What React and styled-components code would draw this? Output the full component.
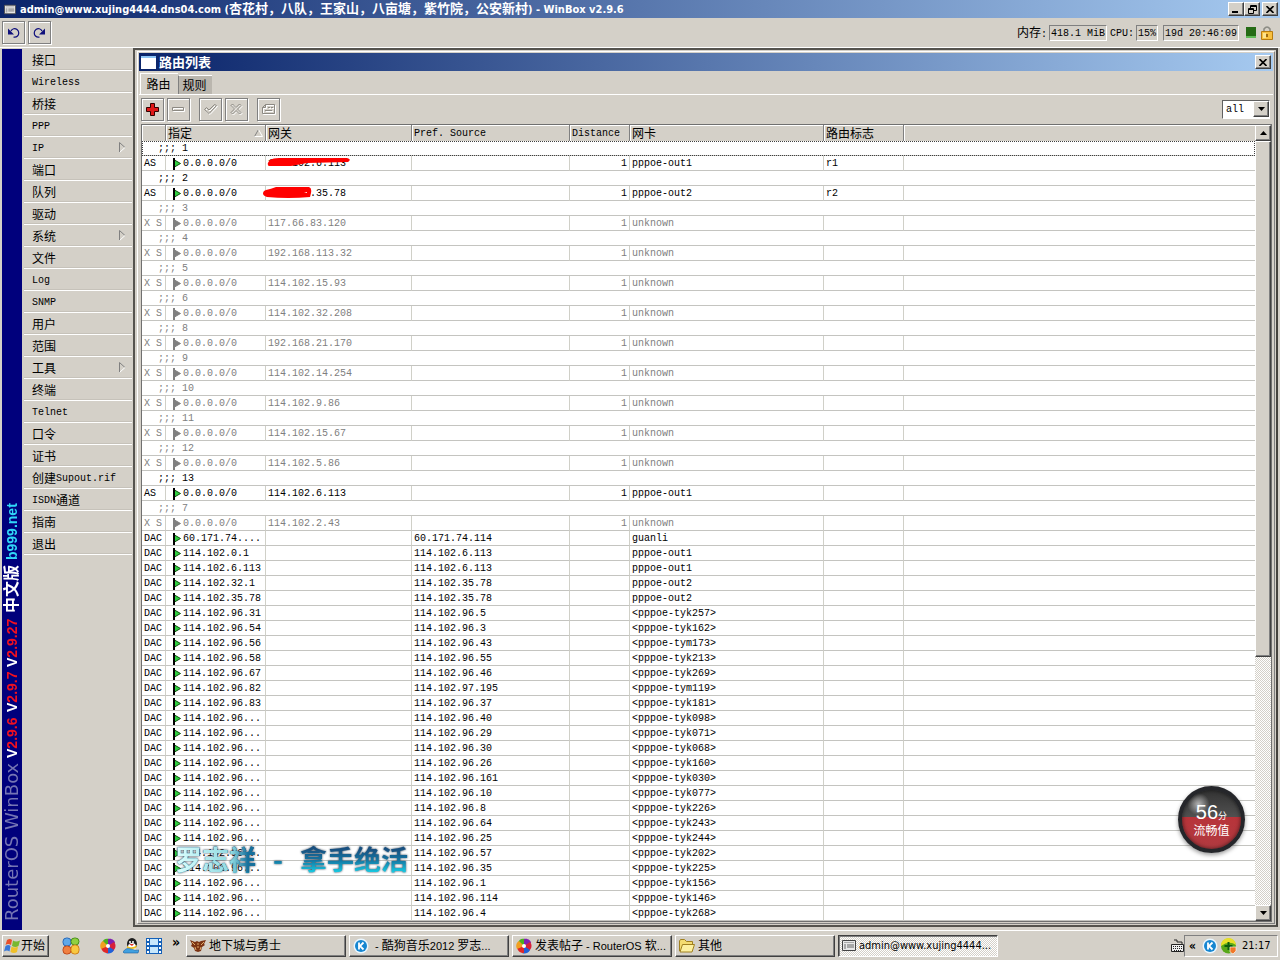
import React from "react";
import styled, { createGlobalStyle } from "styled-components";

const GlobalStyle = createGlobalStyle`
	* {
		box-sizing: border-box;
	}
	body {
		margin: 0;
		overflow: hidden;
		background: #d4d0c8;
		color: #000;
		font: 12px "Noto Sans CJK SC", sans-serif;
	}
	button, select {
		font: inherit;
		color: inherit;
		margin: 0;
		padding: 0;
		border-radius: 0;
	}
`;

const MONO = `"Liberation Mono", "Noto Sans CJK SC", monospace`;
const TAHOMA = `"DejaVu Sans Condensed", "Noto Sans CJK SC", sans-serif`;

const raised = `
	border: 1px solid;
	border-color: #fff #404040 #404040 #fff;
	box-shadow: inset -1px -1px 0 #808080;
	background: #d4d0c8;
`;

const dither = `repeating-conic-gradient(#fff 0 25%, #d4d0c8 0 50%) 0 0 / 2px 2px`;

const Page = styled.div`
	height: 100vh;
	display: flex;
	flex-direction: column;
`;

const TitleBar = styled.header`
	height: 18px;
	flex: none;
	display: flex;
	align-items: center;
	gap: ${(p) => p.$gap || 4}px;
	padding: 0 2px 0 ${(p) => p.$left || 4}px;
	background: linear-gradient(90deg, #0a246a, #a6caf0);
	color: #fff;
	white-space: nowrap;
`;

const Title = styled.h1`
	flex: 1;
	margin: 0;
	font: bold 13px/18px "Noto Sans CJK SC", sans-serif;
`;

const TitleLatin = styled.span`
	font: bold 11px/18px ${TAHOMA};
`;

const WinButtons = styled.div`
	display: flex;
`;

const WinButton = styled.button`
	${raised}
	width: 16px;
	height: 14px;
	display: flex;
	align-items: center;
	justify-content: center;
	margin-left: ${(p) => (p.$gap ? 2 : 0)}px;
`;

const TopBar = styled.div`
	height: 30px;
	flex: none;
	display: flex;
	align-items: center;
	gap: 3px;
	padding: 0 7px 0 2px;
	border-bottom: 1px solid #fff;
`;

const ToolButton = styled.button`
	width: 23px;
	height: 23px;
	display: flex;
	align-items: center;
	justify-content: center;
	background: #d4d0c8;
	border: 1px solid #808080;
	box-shadow: inset 1px 1px 0 #fff, 1px 1px 0 #fff;
	margin-left: ${(p) => (p.$gap ? 6 : 0)}px;
`;

const Status = styled.div`
	margin-left: auto;
	display: flex;
	align-items: center;
	gap: 2px;
	height: 16px;
	white-space: nowrap;
`;

const Readout = styled.output`
	height: 16px;
	padding: 1px 1px 0;
	margin-right: ${(p) => p.$after || 0}px;
	border: 1px solid;
	border-color: #808080 #fff #fff #808080;
	font: 10px/13px ${MONO};
`;

const Latin = styled.span`
	padding-top: 2px;
	font: 10px/14px ${MONO};
`;

const Lamp = styled.span`
	width: 10px;
	height: 11px;
	margin: 0 3px 0 5px;
	background: #256b14;
	border-bottom: 2px solid #5fba55;
`;

const Main = styled.main`
	flex: 1;
	min-height: 0;
	display: flex;
	padding: 0 2px;
`;

const Brand = styled.div`
	width: 20px;
	margin-top: 1px;
	flex: none;
	display: flex;
	align-items: center;
	gap: 5px;
	padding-top: 9px;
	background: #00007c;
	color: #fff;
	writing-mode: vertical-rl;
	text-orientation: sideways;
	transform: rotate(180deg);
	white-space: nowrap;
	font: bold 14px/20px "Liberation Sans", "Noto Sans CJK SC", sans-serif;
`;

const BrandName = styled.span`
	font: 18px/20px "DejaVu Sans", sans-serif;
	color: #7575b4;
`;

const BrandChinese = styled.span`
	font-size: 16px;
`;

const Red = styled.span`
	color: #f01020;
`;

const Cyan = styled.span`
	color: #30d8f8;
`;

const Menu = styled.nav`
	width: 108px;
	margin: 1px 1px 0 2px;
	flex: none;
`;

const MenuButton = styled.button`
	width: 100%;
	height: 22px;
	display: flex;
	align-items: center;
	padding: 0 6px 0 8px;
	border: 0;
	border-bottom: 1px solid #fff;
	box-shadow: inset 0 -1px 0 #c6c2ba;
	background: none;
	text-align: left;
	line-height: 20px;
	svg {
		margin-left: auto;
	}
`;

const Frame = styled.section`
	flex: 1;
	min-width: 0;
	display: flex;
	margin-bottom: 3px;
	padding: 1px 1px 1px 2px;
	border: 2px solid #55534e;
	border-right-color: #45433e;
`;

const RouteWindow = styled.div`
	flex: 1;
	min-width: 0;
	display: flex;
	flex-direction: column;
	padding: 1px;
	border: 1px solid;
	border-color: #fff #808080 #808080 #fff;
`;

const Tabs = styled.div`
	height: 23px;
	flex: none;
	display: flex;
	align-items: flex-end;
	padding-left: 1px;
`;

const Tab = styled.button`
	width: ${(p) => (p.$active ? 38 : 34)}px;
	height: ${(p) => (p.$active ? 21 : 19)}px;
	padding-right: 2px;
	border: 0;
	border-top: 1px solid #fff;
	border-left: 1px solid ${(p) => (p.$active ? "#fff" : "#808080")};
	background: ${(p) => (p.$active ? "#d4d0c8" : "#bab6ae")};
	line-height: 18px;
`;

const ToolRow = styled.div`
	height: 30px;
	flex: none;
	display: flex;
	align-items: center;
	gap: 3px;
	padding: 0 3px 0 2px;
	border-top: 1px solid #fff;
`;

const Filter = styled.div`
	width: 48px;
	height: 19px;
	display: flex;
	margin-left: auto;
	background: #fff;
	border: 1px solid;
	border-color: #606060 #fff #fff #606060;
`;

const FilterSelect = styled.select`
	flex: 1;
	min-width: 0;
	appearance: none;
	border: 0;
	padding: 1px 0 0 3px;
	background: #fff;
	font: 10px/16px ${MONO};
`;

const ArrowButton = styled.button`
	${raised}
	width: 16px;
	height: 16px;
	flex: none;
	display: flex;
	align-items: center;
	justify-content: center;
`;

const Grid = styled.div`
	flex: 1;
	min-height: 0;
	display: flex;
	margin: 0 1px 0 2px;
	border: 1px solid #707070;
	background: #fff;
`;

const Scroller = styled.div`
	flex: 1;
	min-width: 0;
	overflow: hidden;
`;

const Table = styled.table`
	width: 100%;
	table-layout: fixed;
	border-collapse: separate;
	border-spacing: 0;
	font: 10px/13px ${MONO};
`;

const Head = styled.th`
	height: 16px;
	padding: 0 2px;
	background: #d4d0c8;
	border-right: 1px solid #808080;
	box-shadow: inset 1px 1px 0 #fff;
	font-weight: normal;
	line-height: 14px;
	text-align: left;
	white-space: nowrap;
	&:last-child {
		border-right: 0;
	}
`;

const HeadLabel = styled.span`
	height: 16px;
	display: flex;
	align-items: center;
	justify-content: space-between;
`;

const HeadLatin = styled(HeadLabel)`
	padding-top: 2px;
`;

const Chinese = styled.span`
	font: 12px/14px "Noto Sans CJK SC", sans-serif;
`;

const Row = styled.tr`
	color: ${(p) => (p.$off ? "#808080" : "#000")};
`;

const Cell = styled.td`
	height: 15px;
	padding: 1px 2px 0;
	border-right: 1px solid #d0d0c8;
	border-bottom: 1px solid #c4c4c0;
	text-align: ${(p) => p.$align || "left"};
	white-space: pre;
	&:last-child {
		border-right: 0;
	}
`;

const NoteCell = styled(Cell)`
	padding-left: 16px;
	outline: ${(p) => (p.$focus ? "1px dotted #404040" : "none")};
	outline-offset: -1px;
`;

const FlagText = styled.span`
	height: 13px;
	display: flex;
	align-items: center;
	gap: 1px;
	padding-left: 4px;
`;

const Covered = styled.span`
	position: relative;
	display: block;
	svg {
		position: absolute;
		top: 0;
		left: -5px;
	}
`;

const ScrollBar = styled.div`
	width: 16px;
	flex: none;
	display: flex;
	flex-direction: column;
	background: ${dither};
`;

const Thumb = styled.div`
	${raised}
	flex: 27;
`;

const Track = styled.div`
	flex: 13;
`;

const TaskBar = styled.footer`
	height: 30px;
	flex: none;
	display: flex;
	align-items: center;
	padding: 0 2px;
	border-top: 1px solid #fff;
	font: 11px/20px ${TAHOMA};
`;

const StartButton = styled.button`
	${raised}
	width: 47px;
	height: 22px;
	display: flex;
	align-items: center;
	gap: 1px;
	padding-left: 1px;
	white-space: nowrap;
	font-size: 12px;
`;

const QuickLaunch = styled.div`
	width: 137px;
	flex: none;
	display: flex;
	align-items: center;
	gap: 7px;
	padding-left: 13px;
	svg:first-child {
		margin-right: 13px;
	}
`;

const More = styled.span`
	margin: 0 0 8px 3px;
	font: bold 14px/12px ${TAHOMA};
`;

const Tasks = styled.div`
	flex: 1;
	min-width: 0;
	display: flex;
	gap: 3px;
`;

const Task = styled.button`
	${raised}
	flex: 0 1 160px;
	min-width: 0;
	height: 22px;
	display: flex;
	align-items: center;
	gap: 3px;
	padding: 0 2px 0 3px;
	white-space: nowrap;
	font-size: 12px;
	${(p) =>
		p.$active &&
		`
		background: ${dither};
		border-color: #404040 #fff #fff #404040;
		box-shadow: inset 1px 1px 0 #808080;
		font-size: 11px;
	`}
	svg {
		flex: none;
	}
`;

const TaskLatin = styled.span`
	font: 11px/20px "Liberation Sans", sans-serif;
	white-space: pre;
`;

const Tray = styled.div`
	width: 94px;
	height: 22px;
	display: flex;
	align-items: center;
	gap: 3px;
	padding-left: 4px;
	border: 1px solid;
	border-color: #808080 #fff #fff #808080;
`;

const TrayMore = styled.span`
	width: 10px;
	font: bold 12px/16px ${TAHOMA};
`;

const Clock = styled.time`
	margin-left: 2px;
`;

const Lyric = styled.div`
	position: absolute;
	left: 175px;
	bottom: 85px;
	display: flex;
	gap: 17px;
	font: bold 27px/32px "Noto Sans CJK SC", sans-serif;
	color: transparent;
	background: linear-gradient(#185080 20%, #1478a4 55%, #18c8e0 90%);
	background-clip: text;
	filter: drop-shadow(0 0 1px #345);
`;

const Sung = styled.span`
	background: linear-gradient(90deg, #dff 0, #8ed8e0 70%, #16709c 90%);
	background-clip: text;
`;

const Ball = styled.div`
	position: absolute;
	right: 35px;
	bottom: 107px;
	width: 67px;
	height: 67px;
	padding-top: 14px;
	border: 4px solid #25262a;
	border-radius: 50%;
	background: radial-gradient(circle at 28% 24%, #fff9 0, #fff0 18%),
		linear-gradient(#333 0, #505050 45%, #b8343a 46%, #b03a40 100%);
	box-shadow: 0 2px 4px #0006, inset 0 0 4px #0009;
	color: #fff;
	text-align: center;
	line-height: 14px;
	white-space: nowrap;
`;

const Score = styled.div`
	font: 20px/16px "Liberation Sans", sans-serif;
	small {
		font: 9px/14px "Noto Sans CJK SC", sans-serif;
	}
`;

const hidden = "114.102.6.113";

// [comment, flags, gateway, interface, mark]
const commented = [
	["1", "AS", hidden, "pppoe-out1", "r1"],
	["2", "AS", "114.102.35.78", "pppoe-out2", "r2"],
	["3", "X S", "117.66.83.120", "unknown"],
	["4", "X S", "192.168.113.32", "unknown"],
	["5", "X S", "114.102.15.93", "unknown"],
	["6", "X S", "114.102.32.208", "unknown"],
	["8", "X S", "192.168.21.170", "unknown"],
	["9", "X S", "114.102.14.254", "unknown"],
	["10", "X S", "114.102.9.86", "unknown"],
	["11", "X S", "114.102.15.67", "unknown"],
	["12", "X S", "114.102.5.86", "unknown"],
	["13", "AS", "114.102.6.113", "pppoe-out1"],
	["7", "X S", "114.102.2.43", "unknown"],
];

// [destination, pref. source, interface]
const dynamic = [
	["60.171.74....", "60.171.74.114", "guanli"],
	["114.102.0.1", "114.102.6.113", "pppoe-out1"],
	["114.102.6.113", "114.102.6.113", "pppoe-out1"],
	["114.102.32.1", "114.102.35.78", "pppoe-out2"],
	["114.102.35.78", "114.102.35.78", "pppoe-out2"],
	["114.102.96.31", "114.102.96.5", "<pppoe-tyk257>"],
	["114.102.96.54", "114.102.96.3", "<pppoe-tyk162>"],
	["114.102.96.56", "114.102.96.43", "<pppoe-tym173>"],
	["114.102.96.58", "114.102.96.55", "<pppoe-tyk213>"],
	["114.102.96.67", "114.102.96.46", "<pppoe-tyk269>"],
	["114.102.96.82", "114.102.97.195", "<pppoe-tym119>"],
	["114.102.96.83", "114.102.96.37", "<pppoe-tyk181>"],
	["114.102.96...", "114.102.96.40", "<pppoe-tyk098>"],
	["114.102.96...", "114.102.96.29", "<pppoe-tyk071>"],
	["114.102.96...", "114.102.96.30", "<pppoe-tyk068>"],
	["114.102.96...", "114.102.96.26", "<pppoe-tyk160>"],
	["114.102.96...", "114.102.96.161", "<pppoe-tyk030>"],
	["114.102.96...", "114.102.96.10", "<pppoe-tyk077>"],
	["114.102.96...", "114.102.96.8", "<pppoe-tyk226>"],
	["114.102.96...", "114.102.96.64", "<pppoe-tyk243>"],
	["114.102.96...", "114.102.96.25", "<pppoe-tyk244>"],
	["114.102.96...", "114.102.96.57", "<pppoe-tyk202>"],
	["114.102.96...", "114.102.96.35", "<pppoe-tyk225>"],
	["114.102.96...", "114.102.96.1", "<pppoe-tyk156>"],
	["114.102.96...", "114.102.96.114", "<pppoe-tyk146>"],
	["114.102.96...", "114.102.96.4", "<pppoe-tyk268>"],
];

const menu = [
	"接口", "Wireless", "桥接", "PPP", "IP", "端口", "队列", "驱动", "系统",
	"文件", "Log", "SNMP", "用户", "范围", "工具", "终端", "Telnet", "口令",
	"证书", "创建Supout.rif", "ISDN通道", "指南", "退出",
];
const submenus = ["IP", "系统", "工具"];

// Latin runs are set in the fixed-width face, Chinese runs in the larger one
const Mixed = ({ text }) =>
	text
		.split(/([\x20-\x7e]+)/)
		.filter(Boolean)
		.map((part) =>
			/[\x20-\x7e]/.test(part) ? (
				<Latin key={part}>{part}</Latin>
			) : (
				<Chinese key={part}>{part}</Chinese>
			)
		);

const Flag = ({ off }) => (
	<svg width="10" height="12" viewBox="0 0 10 12">
		<path
			d="M2.5 2 8.5 5.5 2.5 9Z"
			fill={off ? "#808080" : "#30d040"}
			stroke={off ? "#808080" : "#0a500a"}
		/>
		<path d="M1 0h2v12H1z" fill={off ? "#808080" : "#000"} />
	</svg>
);

const Down = ({ up }) => (
	<svg width="7" height="4" viewBox="0 0 7 4">
		<path d={up ? "M0 4h7L3.5 0z" : "M0 0h7L3.5 4z"} fill="#000" />
	</svg>
);

const Cross = () => (
	<svg width="8" height="7" viewBox="0 0 8 7">
		<path d="M.5 0 7.5 7M7.5 0 .5 7" stroke="#000" strokeWidth="1.6" />
	</svg>
);

const Turn = ({ redo }) => (
	<svg width="13" height="12" viewBox="0 0 13 12">
		<g transform={redo ? "translate(13 0) scale(-1 1)" : undefined}>
			<path
				d="M4 4C5 1.500 8 1 10 2.500c2.500 2 2 5 .5 6.500C9.500 10 8 10.500 6.500 10"
				fill="none"
				stroke="#10107c"
				strokeWidth="1.2"
			/>
			<path d="M1 1.500v6h6z" fill="#10107c" />
		</g>
	</svg>
);

const Etched = ({ d }) => (
	<svg width="15" height="15" viewBox="0 0 15 15" fill="none">
		<path d={d} stroke="#fff" transform="translate(1 1)" />
		<path d={d} stroke="#8c8982" />
	</svg>
);

const Screen = ({ w = 14 }) => (
	<svg width={w} height="11" viewBox="0 0 14 11">
		<path d="M.5.5h13v10H.5z" fill="#e8e8e8" stroke="#444" />
		<path d="M2 2h10v1H2z" fill="#aaa" />
		<path d="M2 4h2v5H2zM5 4h7v4H5z" fill="#a8a8a8" />
	</svg>
);

const Pinwheel = () => (
	<svg width="16" height="16" viewBox="0 0 16 16">
		<path d="M8 8 2 5C3 1 6 0 9 1z" fill="#4ab020" />
		<path d="M8 8 8 1c4-1 7 2 7 4z" fill="#8020b0" />
		<path d="M8 8 14 4c3 4 1 7-1 9z" fill="#d82038" />
		<path d="M8 8 14 12c-2 4-6 4-8 3z" fill="#2060d8" />
		<path d="M8 8 8 15c-4 0-6-2-7-5z" fill="#e02828" />
		<path d="M8 8 1 11C-1 7 1 4 3 3z" fill="#f0a020" />
		<circle cx="8" cy="8" r="2" fill="#fff" />
	</svg>
);

const Kugou = () => (
	<svg width="16" height="16" viewBox="0 0 16 16">
		<circle cx="8" cy="8" r="7.500" fill="#e8f6ff" />
		<circle cx="8" cy="8" r="6" fill="#1686d0" />
		<path d="M6 4.500v7M10.500 4.500 7 8l3.500 3.500" fill="none" stroke="#fff" strokeWidth="1.800" />
	</svg>
);

const Windows = () => (
	<svg width="16" height="16" viewBox="0 0 16 16">
		<path d="M3 2q3-2 5 0L7 7Q4 5 1.500 7z" fill="#e8502a" />
		<path d="M9 2.500q3 2 7 0L14.500 8q-3 2-6.500 0z" fill="#78b830" />
		<path d="M1.500 8q3-2 5 0l-1 5.500Q3 11.500 0 13.500z" fill="#3878d8" />
		<path d="M7.500 8.500q3 2 6.500 0l-1 5.500q-3 2-6.500 0z" fill="#f0c028" />
	</svg>
);

const Clover = () => (
	<svg width="18" height="18" viewBox="0 0 18 18" strokeWidth="1">
		<rect x="1" y="1" width="8" height="8" rx="3.500" fill="#60a8e8" stroke="#2868b8" />
		<rect x="9" y="1" width="8" height="7" rx="3.500" fill="#90d040" stroke="#48901c" />
		<rect x="1" y="9" width="8" height="8" rx="3.500" fill="#f08040" stroke="#c04818" />
		<rect x="9" y="8" width="8" height="9" rx="3.500" fill="#f8c840" stroke="#d08018" />
	</svg>
);

const Penguin = () => (
	<svg width="16" height="16" viewBox="0 0 16 16">
		<ellipse cx="9" cy="6" rx="5" ry="6" fill="#1c1c1c" />
		<ellipse cx="9" cy="9" rx="4" ry="4" fill="#fff" />
		<path d="M4 8q5 3 10-1l-1 3q-4 2-9 0z" fill="#f0c020" />
		<path d="M0 14q3-5 8-3t8 1l-1 3H1z" fill="#40a0e0" stroke="#1c60a0" strokeWidth=".6" />
		<circle cx="7" cy="4" r="1" fill="#fff" />
		<circle cx="10" cy="4" r="1" fill="#fff" />
		<path d="M6 6h5l-2 2z" fill="#e03020" />
	</svg>
);

const Film = () => (
	<svg width="16" height="16" viewBox="0 0 16 16">
		<path d="M0 0h16v16H0z" fill="#1460b8" />
		<path d="M4 1h8v6H4zM4 9h8v6H4z" fill="#c8e8fc" />
		<path d="M2 1v14M14 1v14" stroke="#fff" strokeWidth="2" strokeDasharray="2 2" />
	</svg>
);

const Dragon = () => (
	<svg width="16" height="16" viewBox="0 0 16 16">
		<path
			d="M0 2l5 2 2-1 2 1 2-1 5-1-2 4 1 1-3 2-1 4-3 1-3-1-1-3-3-2 1-2z"
			fill="#7c3414"
		/>
		<path d="M2 4l3 3M5 9l1 3M11 9l-1 3M14 4l-3 3M7 6h2M7 9h2" fill="none" stroke="#e0a868" />
	</svg>
);

const Folder = () => (
	<svg width="16" height="14" viewBox="0 0 16 14">
		<path d="M.5 12V2l1-1.500h4l2 2h6v3" fill="#f4dc70" stroke="#a08020" />
		<path d="M1 13 3.500 5.500h12L13 13z" fill="#fcf0a0" stroke="#a08020" />
	</svg>
);

const Keyboard = () => (
	<svg width="13" height="14" viewBox="0 0 13 14">
		<path d="M3 1h3v2h5v2" fill="none" stroke="#222" />
		<path d="M.5 5.500h12v7H.5z" fill="#eee" stroke="#222" />
		<path d="M2 7.500h9M2 9.500h9M3 11.500h7" stroke="#222" strokeDasharray="1 1" />
	</svg>
);

const Shield = () => (
	<svg width="16" height="16" viewBox="0 0 16 16">
		<circle cx="7.500" cy="8" r="7.500" fill="#58a818" />
		<path d="M0 8a7.500 7.500 0 0 1 15-1Q8 2 0 8z" fill="#e8e028" />
		<path d="M7.500 4v8M3.500 8h8" stroke="#0c5c10" strokeWidth="2" />
		<path d="M9 9h6v4l-3 3-3-2z" fill="#f07828" stroke="#fff" strokeWidth=".6" />
	</svg>
);

const Lock = () => (
	<svg width="12" height="14" viewBox="0 0 12 14">
		<path d="M3 7V3q3-4 6 0v4" fill="none" stroke="#8c8c84" strokeWidth="1.600" />
		<path d="M.5 5.500h11v8H.5z" fill="#f8c040" stroke="#b87c10" />
		<path d="M2 7h3v5H2z" fill="#fce490" />
		<path d="M6 8v3" stroke="#855000" strokeWidth="1.500" />
	</svg>
);

const Scribble = ({ short }) => (
	<svg width="90" height="14" viewBox="0 0 90 14">
		{short ? (
			<path
				d="M3 3Q8 2 13 0L46 0Q49 1 48 6L47 10Q25 12 4 10Q-2 8 1 4z"
				fill="#f00"
			/>
		) : (
			<path
				d="M7 3Q10 1 16 1L84 1Q89 2 85 5L44 6 28 9Q15 9 6 9Q3 7 7 3z"
				fill="#f00"
			/>
		)}
		{short && <path d="M41 6l3-1v1z" fill="#fff" />}
	</svg>
);

const RouteRow = ({ flags, dst, gateway, pref, distance, iface, mark, scribble }) => {
	const off = flags === "X S";
	return (
		<Row $off={off}>
			<Cell>{flags}</Cell>
			<Cell>
				<FlagText>
					<Flag off={off} />
					{dst}
				</FlagText>
			</Cell>
			<Cell>
				{scribble ? (
					<Covered>
						{gateway}
						<Scribble short={scribble === "2"} />
					</Covered>
				) : (
					gateway
				)}
			</Cell>
			<Cell>{pref}</Cell>
			<Cell $align="right">{distance}</Cell>
			<Cell>{iface}</Cell>
			<Cell>{mark}</Cell>
			<Cell />
		</Row>
	);
};

const RouteTable = () => (
	<Table>
		<colgroup>
			<col width="24" />
			<col width="100" />
			<col width="146" />
			<col width="158" />
			<col width="60" />
			<col width="194" />
			<col width="80" />
			<col />
		</colgroup>
		<thead>
			<tr>
				<Head />
				<Head>
					<HeadLabel>
						<Chinese>指定</Chinese>
						<svg width="9" height="8" viewBox="0 0 9 8" fill="none">
							<path d="M.5 7.500 4.500.5" stroke="#808080" />
							<path d="M4.500.5 8.500 7.500H.5" stroke="#fff" />
						</svg>
					</HeadLabel>
				</Head>
				<Head><HeadLabel><Chinese>网关</Chinese></HeadLabel></Head>
				<Head><HeadLatin>Pref. Source</HeadLatin></Head>
				<Head><HeadLatin>Distance</HeadLatin></Head>
				<Head><HeadLabel><Chinese>网卡</Chinese></HeadLabel></Head>
				<Head><HeadLabel><Chinese>路由标志</Chinese></HeadLabel></Head>
				<Head />
			</tr>
		</thead>
		<tbody>
			{commented.map(([note, flags, gateway, iface, mark]) => (
				<React.Fragment key={note}>
					<Row $off={flags === "X S"}>
						<NoteCell colSpan={8} $focus={note === "1"}>
							{";;; " + note}
						</NoteCell>
					</Row>
					<RouteRow
						flags={flags}
						dst="0.0.0.0/0"
						gateway={gateway}
						distance="1"
						iface={iface}
						mark={mark}
						scribble={mark && note}
					/>
				</React.Fragment>
			))}
			{dynamic.map(([dst, pref, iface]) => (
				<RouteRow key={pref + iface + dst} flags="DAC" dst={dst} pref={pref} iface={iface} />
			))}
		</tbody>
	</Table>
);

const App = () => (
	<Page>
		<GlobalStyle />
		<TitleBar>
			<Screen w={12} />
			<Title>
				<TitleLatin>admin@www.xujing4444.dns04.com (</TitleLatin>
				杏花村，八队，王家山，八亩塘，紫竹院，公安新村
				<TitleLatin>) - WinBox v2.9.6</TitleLatin>
			</Title>
			<WinButtons>
				<WinButton aria-label="Minimize">
					<svg width="8" height="8"><path d="M0 6h6v2H0z" /></svg>
				</WinButton>
				<WinButton aria-label="Restore">
					<svg width="9" height="9" fill="none" stroke="#000">
						<path d="M2.500 3V.5h6v5H6M2 1.500h7M.5 3.500h5v5h-5zM0 4.500h6" />
					</svg>
				</WinButton>
				<WinButton aria-label="Close" $gap><Cross /></WinButton>
			</WinButtons>
		</TitleBar>
		<TopBar>
			<ToolButton aria-label="Undo"><Turn /></ToolButton>
			<ToolButton aria-label="Redo"><Turn redo /></ToolButton>
			<Status>
				<span><Mixed text="内存:" /></span>
				<Readout $after={1}>418.1 MiB</Readout>
				<Latin>CPU:</Latin>
				<Readout $after={3}>15%</Readout>
				<Readout>19d 20:46:09</Readout>
				<Lamp />
				<Lock />
			</Status>
		</TopBar>
		<Main>
			<Brand>
				<BrandName>RouterOS WinBox</BrandName>
				<span>V<Red>2.9.6</Red></span>
				<span>V<Red>2.9.7</Red></span>
				<span>V<Red>2.9.27</Red></span>
				<BrandChinese>中文版</BrandChinese>
				<Cyan>b999.net</Cyan>
			</Brand>
			<Menu>
				{menu.map((item) => (
					<MenuButton key={item}>
						<Mixed text={item} />
						{submenus.includes(item) && (
							<svg width="7" height="11" viewBox="0 0 7 11" fill="none">
								<path d="M.5 10.500V.5L6 5.500" stroke="#808080" />
								<path d="M6 5.500.5 10.500" stroke="#fff" />
							</svg>
						)}
					</MenuButton>
				))}
			</Menu>
			<Frame>
				<RouteWindow>
					<TitleBar $left={2} $gap={3}>
						<svg width="15" height="13" viewBox="0 0 15 13">
							<path d="M0 0h15v13H0z" fill="#fff" />
							<path d="M0 0h15v2H0z" fill="#8cc4f4" />
						</svg>
						<Title as="h2">路由列表</Title>
						<WinButton aria-label="Close"><Cross /></WinButton>
					</TitleBar>
					<Tabs role="tablist">
						<Tab role="tab" aria-selected="true" $active>路由</Tab>
						<Tab role="tab" aria-selected="false">规则</Tab>
					</Tabs>
					<ToolRow>
						<ToolButton aria-label="Add">
							<svg width="13" height="13" viewBox="0 0 13 13">
								<path
									d="M4.500.5h4v4h4v4h-4v4h-4v-4h-4v-4h4z"
									fill="#e01818"
									stroke="#300"
								/>
							</svg>
						</ToolButton>
						<ToolButton aria-label="Remove"><Etched d="M1.500 5.500h11v3h-11z" /></ToolButton>
						<ToolButton aria-label="Enable" $gap>
							<Etched d="M1.500 7.500l2-2L6 8l5.500-5.500 2 1L6 11.500z" />
						</ToolButton>
						<ToolButton aria-label="Disable">
							<Etched d="M2 3.500 3.500 2 7 5.500 10.500 2 12 3.500 8.500 7 12 10.500 10.500 12 7 8.500 3.500 12 2 10.500 5.500 7z" />
						</ToolButton>
						<ToolButton aria-label="Comment" $gap>
							<Etched d="M1.500 5.500l3-3h9v9h-12zM1.500 5.500h3v-3M7 5.500h2M10 5.500h2M4 8.500h7" />
						</ToolButton>
						<Filter>
							<FilterSelect aria-label="Filter" defaultValue="all">
								<option>all</option>
							</FilterSelect>
							<ArrowButton aria-label="Open filter" tabIndex={-1}><Down /></ArrowButton>
						</Filter>
					</ToolRow>
					<Grid>
						<Scroller>
							<RouteTable />
						</Scroller>
						<ScrollBar>
							<ArrowButton aria-label="Scroll up"><Down up /></ArrowButton>
							<Thumb />
							<Track />
							<ArrowButton aria-label="Scroll down"><Down /></ArrowButton>
						</ScrollBar>
					</Grid>
				</RouteWindow>
			</Frame>
		</Main>
		<TaskBar>
			<StartButton><Windows />开始</StartButton>
			<QuickLaunch>
				<Clover />
				<Pinwheel />
				<Penguin />
				<Film />
				<More>»</More>
			</QuickLaunch>
			<Tasks>
				<Task><Dragon />地下城与勇士</Task>
				<Task>
					<Kugou />
					<span>
						<TaskLatin> - </TaskLatin>酷狗音乐<TaskLatin>2012 </TaskLatin>罗志
						<TaskLatin>...</TaskLatin>
					</span>
				</Task>
				<Task>
					<Pinwheel />
					<span>
						发表帖子<TaskLatin> - RouterOS </TaskLatin>软<TaskLatin>...</TaskLatin>
					</span>
				</Task>
				<Task><Folder />其他</Task>
				<Task $active><Screen />admin@www.xujing4444...</Task>
			</Tasks>
			<Keyboard />
			<Tray>
				<TrayMore>«</TrayMore>
				<Kugou />
				<Shield />
				<Clock>21:17</Clock>
			</Tray>
		</TaskBar>
		<Lyric>
			<Sung>罗志祥</Sung>
			<span>-</span>
			<span>拿手绝活</span>
		</Lyric>
		<Ball>
			<Score>56<small>分</small></Score>
			流畅值
		</Ball>
	</Page>
);

export default App;
